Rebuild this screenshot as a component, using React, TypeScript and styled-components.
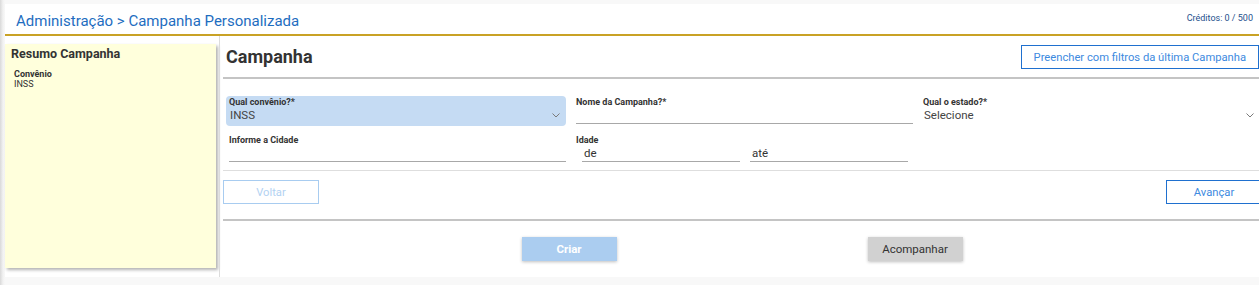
import React from 'react';
import styled, { createGlobalStyle } from 'styled-components';

const GlobalStyle = createGlobalStyle`
    html, body {
        margin: 0;
        padding: 0;
    }

    body {
        font-family: Roboto, 'Liberation Sans', Arial, sans-serif;
        background: linear-gradient(to right, #d9d9d9 0, #f2f2f2 3px, #f8f8f8 5px);
        width: 1259px;
        height: 285px;
        overflow: hidden;
    }
`;

const Page = styled.div`
    padding: 4px 0 0 5px;
    height: 285px;
    box-sizing: border-box;
`;

const Header = styled.header`
    height: 30px;
    background: #fff;
    border-bottom: 2px solid #c9a225;
    display: flex;
    align-items: center;
    justify-content: space-between;
    padding: 0 6px 0 11px;
`;

const Breadcrumb = styled.h1`
    margin: 3px 0 0;
    font-size: 15px;
    font-weight: 400;
    color: #1e6dbf;
`;

const Credits = styled.span`
    font-size: 9px;
    color: #254f8c;
    margin-top: -3px;
`;

const Main = styled.main`
    display: flex;
    background: #fff;
    height: 241px;
`;

const Sidebar = styled.aside`
    width: 211px;
    height: 224px;
    margin-top: 8px;
    background: #ffffdc;
    box-shadow: 2px 2px 3px rgba(0, 0, 0, 0.3);
    box-sizing: border-box;
    padding: 2px 6px;
    color: #333;
`;

const SidebarTitle = styled.h2`
    margin: 0 0 8px;
    font-size: 12.5px;
    font-weight: 700;
`;

const SummaryLabel = styled.div`
    font-size: 9px;
    font-weight: 700;
    padding-left: 3px;
`;

const SummaryValue = styled.div`
    font-size: 9px;
    padding-left: 3px;
    line-height: 11px;
`;

const Content = styled.section`
    flex: 1;
    min-width: 0;
    margin-left: 3px;
    border-left: 1px solid #dcdcdc;
    padding-left: 3px;
`;

const TitleBar = styled.div`
    display: flex;
    align-items: flex-start;
    justify-content: space-between;
    padding-top: 9px;
    height: 32px;
    border-bottom: 2px solid #c4c4c4;
`;

const Title = styled.h2`
    margin: 1px 0 0 3px;
    font-size: 18px;
    font-weight: 700;
    color: #333;
`;

const OutlineButton = styled.button<{ $muted?: boolean; $edge?: boolean }>`
    height: 24px;
    padding: 0 12px;
    min-width: 96px;
    margin-right: ${({ $edge }) => ($edge ? '-3px' : '0')};
    background: #fff;
    border: 1px solid ${({ $muted }) => ($muted ? '#a8ccf0' : '#1f70cf')};
    color: ${({ $muted }) => ($muted ? '#b3d2f2' : '#3d8ae0')};
    font-family: inherit;
    font-size: 11.2px;
    cursor: pointer;
`;

const FormGrid = styled.div`
    display: grid;
    grid-template-columns: repeat(3, 340px);
    align-content: start;
    column-gap: 7px;
    row-gap: 8px;
    padding: 17px 0 0 3px;
    height: 74px;
    border-bottom: 1px solid #dedede;
`;

const Field = styled.div<{ $active?: boolean }>`
    position: relative;
    height: 30px;
    box-sizing: border-box;
    padding: 1px 0 0 3px;
    border-radius: 4px;
    background: ${({ $active }) => ($active ? '#c5dbf3' : 'transparent')};
    color: #333;
`;

const Label = styled.div`
    font-size: 9px;
    font-weight: 700;
    line-height: 11px;
`;

const Value = styled.div<{ $underline?: boolean }>`
    font-size: 11.5px;
    line-height: 14px;
    height: 15px;
    color: #444;
    padding-left: 1px;
    border-bottom: ${({ $underline }) => ($underline ? '1px solid #a8a8a8' : 'none')};
`;

const RangeRow = styled.div`
    display: flex;
    gap: 10px;
    padding-left: 6px;
`;

const RangeInput = styled.div`
    width: 156px;
    font-size: 11.5px;
    line-height: 14px;
    height: 15px;
    color: #333;
    padding-left: 2px;
    border-bottom: 1px solid #a8a8a8;
`;

const Chevron = styled.svg`
    position: absolute;
    right: 6px;
    top: 17px;
    width: 8px;
    height: 5px;
`;

const NavBar = styled.div`
    display: flex;
    justify-content: space-between;
    padding-top: 9px;
    height: 39px;
    border-bottom: 2px solid #c4c4c4;
`;

const Actions = styled.div`
    display: flex;
    justify-content: center;
    gap: 251px;
    padding-top: 16px;
    padding-left: 2px;
`;

const FilledButton = styled.button<{ $primary?: boolean }>`
    width: 95px;
    height: 24px;
    border: none;
    background: ${({ $primary }) => ($primary ? '#abcdf0' : '#d1d1d1')};
    color: ${({ $primary }) => ($primary ? '#fff' : '#333')};
    font-family: inherit;
    font-size: 11.5px;
    font-weight: ${({ $primary }) => ($primary ? 700 : 400)};
    box-shadow: 0 1px 3px rgba(0, 0, 0, 0.25);
    cursor: pointer;
`;

const ChevronIcon: React.FC = () => (
    <Chevron viewBox="0 0 8 5">
        <path d="M0.5 0.5 L4 4 L7.5 0.5" fill="none" stroke="#7a7a7a" strokeWidth="1" />
    </Chevron>
);

const App: React.FC = () => {
    return (
        <>
            <GlobalStyle />
            <Page>
                <Header>
                    <Breadcrumb>Administração &gt; Campanha Personalizada</Breadcrumb>
                    <Credits>Créditos: 0 / 500</Credits>
                </Header>
                <Main>
                    <Sidebar>
                        <SidebarTitle>Resumo Campanha</SidebarTitle>
                        <SummaryLabel>Convênio</SummaryLabel>
                        <SummaryValue>INSS</SummaryValue>
                    </Sidebar>
                    <Content>
                        <TitleBar>
                            <Title>Campanha</Title>
                            <OutlineButton>Preencher com filtros da última Campanha</OutlineButton>
                        </TitleBar>
                        <FormGrid>
                            <Field $active>
                                <Label>Qual convênio?*</Label>
                                <Value>INSS</Value>
                                <ChevronIcon />
                            </Field>
                            <Field>
                                <Label>Nome da Campanha?*</Label>
                                <Value $underline />
                            </Field>
                            <Field>
                                <Label>Qual o estado?*</Label>
                                <Value>Selecione</Value>
                                <ChevronIcon />
                            </Field>
                            <Field>
                                <Label>Informe a Cidade</Label>
                                <Value $underline />
                            </Field>
                            <Field>
                                <Label>Idade</Label>
                                <RangeRow>
                                    <RangeInput>de</RangeInput>
                                    <RangeInput>até</RangeInput>
                                </RangeRow>
                            </Field>
                        </FormGrid>
                        <NavBar>
                            <OutlineButton $muted>Voltar</OutlineButton>
                            <OutlineButton $edge>Avançar</OutlineButton>
                        </NavBar>
                        <Actions>
                            <FilledButton $primary>Criar</FilledButton>
                            <FilledButton>Acompanhar</FilledButton>
                        </Actions>
                    </Content>
                </Main>
            </Page>
        </>
    );
};

export default App;
